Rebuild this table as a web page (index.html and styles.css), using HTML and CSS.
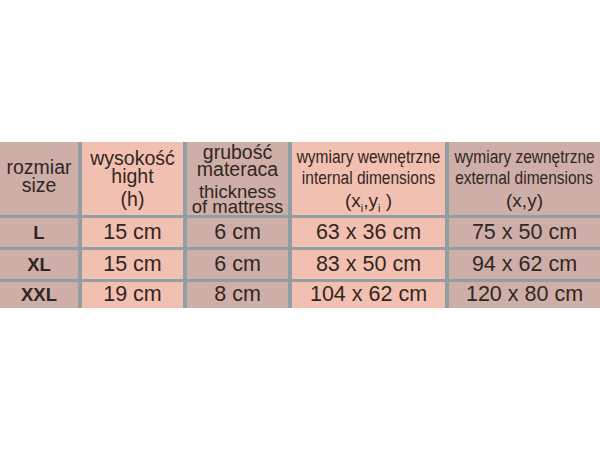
FILE: index.html
```html
<!DOCTYPE html>
<html lang="pl">
<head>
<meta charset="utf-8">
<title>Tabela rozmiarów</title>
<link rel="stylesheet" href="styles.css">
</head>
<body>
<div class="page">
  <div class="table">
    <div class="cell dusty head c1"><span>rozmiar</span><span>size</span></div>
    <div class="cell salmon head c2"><span>wysokość</span><span>hight</span><span class="gap">(h)</span></div>
    <div class="cell dusty head c3"><span>grubość</span><span>materaca</span><span class="gap">thickness</span><span class="tight">of mattress</span></div>
    <div class="cell salmon head c4"><span>wymiary wewnętrzne</span><span>internal dimensions</span><span class="last">(x<sub>i</sub>,y<sub>i</sub> )</span></div>
    <div class="cell dusty head c4"><span>wymiary zewnętrzne</span><span>external dimensions</span><span class="last">(x,y)</span></div>

    <div class="cell dusty size">L</div>
    <div class="cell salmon data">15 cm</div>
    <div class="cell dusty data">6 cm</div>
    <div class="cell salmon data">63 x 36 cm</div>
    <div class="cell dusty data">75 x 50 cm</div>

    <div class="cell dusty size">XL</div>
    <div class="cell salmon data">15 cm</div>
    <div class="cell dusty data">6 cm</div>
    <div class="cell salmon data">83 x 50 cm</div>
    <div class="cell dusty data">94 x 62 cm</div>

    <div class="cell dusty size">XXL</div>
    <div class="cell salmon data">19 cm</div>
    <div class="cell dusty data">8 cm</div>
    <div class="cell salmon data">104 x 62 cm</div>
    <div class="cell dusty data">120 x 80 cm</div>
  </div>
</div>
</body>
</html>
```

FILE: styles.css
```css
html, body {
  margin: 0;
  padding: 0;
  background: #ffffff;
}

.page {
  width: 600px;
  height: 450px;
  padding-top: 142px;
  box-sizing: border-box;
  overflow: hidden;
}

.table {
  display: grid;
  grid-template-columns: 78px 101px 101px 153px 151px;
  grid-template-rows: 73px 29px 29px 26px;
  column-gap: 4px;
  row-gap: 3px;
  width: 600px;
  background: #939ea4;
  font-family: "Liberation Sans", Arial, sans-serif;
  color: #33261f;
}

.cell {
  display: flex;
  flex-direction: column;
  align-items: center;
  justify-content: center;
  text-align: center;
  white-space: nowrap;
  min-width: 0;
}

.dusty {
  background: #cdafa8;
}

.salmon {
  background: #f1c0b0;
}

.head span {
  display: block;
}

.c1 {
  font-size: 19.5px;
  line-height: 18px;
  padding-bottom: 5px;
}

.c2 {
  font-size: 19.5px;
  line-height: 18px;
}

.c2 .gap {
  margin-top: 5px;
}

.c3 {
  font-size: 19.5px;
  line-height: 17px;
}

.c3 .gap {
  margin-top: 5px;
  font-size: 18.5px;
}

.c3 .tight {
  font-size: 18.5px;
  line-height: 14px;
}

.c4 {
  font-size: 18px;
  line-height: 21px;
  padding-top: 1px;
}

.c4 span {
  transform: scaleX(0.86);
}

.c4 .last {
  margin-top: 1px;
  font-size: 19px;
  transform: none;
}

.c4 sub {
  font-size: 11px;
  line-height: 0;
}

.data {
  font-size: 21.5px;
  padding-bottom: 1px;
}

.size {
  font-size: 18.5px;
  font-weight: bold;
}
```
